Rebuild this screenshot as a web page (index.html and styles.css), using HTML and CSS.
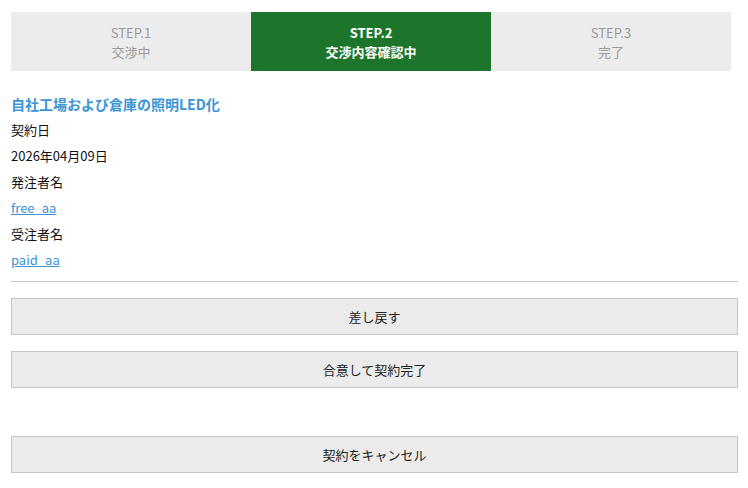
FILE: index.html
```html
<!DOCTYPE html>
<html lang="ja">
<head>
<meta charset="utf-8">
<link rel="stylesheet" href="styles.css">
</head>
<body>
<div class="page">
  <div class="steps">
    <div class="step"><span>STEP.1</span><span>交渉中</span></div>
    <div class="step active"><span>STEP.2</span><span>交渉内容確認中</span></div>
    <div class="step"><span>STEP.3</span><span>完了</span></div>
  </div>
  <h1 class="title">自社工場および倉庫の照明LED化</h1>
  <dl class="info">
    <dt>契約日</dt>
    <dd>2026年04月09日</dd>
    <dt>発注者名</dt>
    <dd><a href="#">free_aa</a></dd>
    <dt>受注者名</dt>
    <dd><a href="#">paid_aa</a></dd>
  </dl>
  <hr class="divider">
  <div class="actions">
    <button class="btn">差し戻す</button>
    <button class="btn">合意して契約完了</button>
    <button class="btn btn-cancel">契約をキャンセル</button>
  </div>
</div>
</body>
</html>
```
FILE: styles.css
```css
html, body {
  margin: 0;
  padding: 0;
  background: #fff;
}
body {
  font-family: "Noto Sans CJK JP", "Noto Sans", sans-serif;
  font-size: 13px;
  color: #111;
}
.page {
  padding: 12px 10px 0 11px;
}
.steps {
  display: flex;
  width: 720px;
}
.step {
  flex: 1;
  height: 59px;
  box-sizing: border-box;
  background: #ececec;
  color: #9a9a9a;
  display: flex;
  flex-direction: column;
  align-items: center;
  justify-content: center;
  line-height: 19px;
  font-size: 13px;
}
.step.active {
  background: #1d752b;
  color: #fff;
  font-weight: bold;
}
.title {
  margin: 20px 0 0;
  font-size: 14px;
  font-weight: bold;
  line-height: 26px;
  color: #3b95d5;
}
.info {
  margin: 0;
}
.info dt, .info dd {
  margin: 0;
  line-height: 26px;
}
.info a {
  color: #3a93d6;
  text-decoration: underline;
}
.divider {
  margin: 8px 0 0;
  border: 0;
  border-top: 1px solid #c6c6c6;
  height: 0;
}
.actions {
  display: flex;
  flex-direction: column;
  gap: 16px;
  padding-top: 16px;
}
.btn {
  display: block;
  width: 100%;
  height: 37px;
  box-sizing: border-box;
  border: 1px solid #c6c6c6;
  background: #ebebeb;
  color: #222;
  font-family: "Noto Sans CJK JP", "Noto Sans", sans-serif;
  font-size: 13px;
  padding: 0;
  border-radius: 0;
}
.btn-cancel {
  margin-top: 32px;
}
```
